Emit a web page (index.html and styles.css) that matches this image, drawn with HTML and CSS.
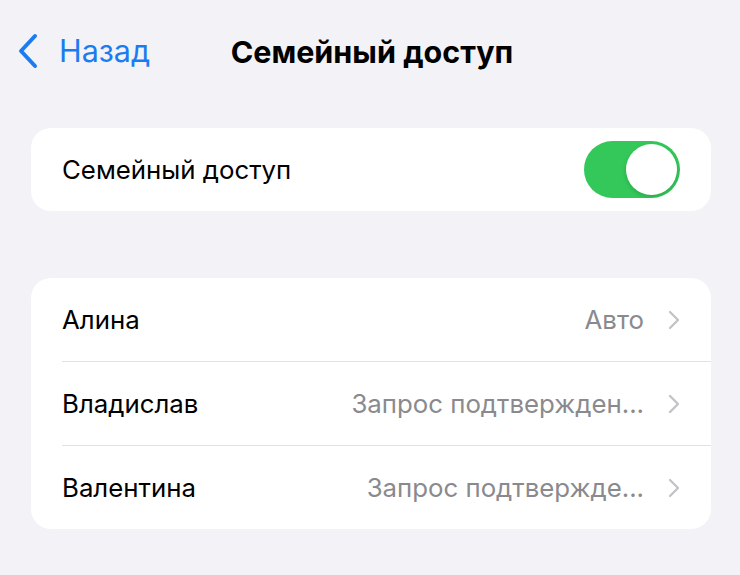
FILE: index.html
```html
<!DOCTYPE html>
<html>
<head>
  <meta charset="utf-8">
  <link rel="stylesheet" href="styles.css">
</head>
<body>
  <div class="screen">
    <header class="navbar">
      <a class="back">
        <svg class="back-icon" width="22" height="36" viewBox="0 0 22 36">
          <path d="M18 3 L4 18 L18 33" fill="none" stroke="#1a7cf0" stroke-width="4" stroke-linecap="round" stroke-linejoin="round"/>
        </svg>
        <span>Назад</span>
      </a>
      <h1 class="title">Семейный доступ</h1>
    </header>

    <section class="group">
      <div class="row">
        <span class="label">Семейный доступ</span>
        <div class="switch on"><div class="knob"></div></div>
      </div>
    </section>

    <section class="group list">
      <div class="row">
        <span class="label">Алина</span>
        <span class="value">Авто</span>
        <svg class="chevron" width="14" height="22" viewBox="0 0 14 22">
          <path d="M3 3 L11 11 L3 19" fill="none" stroke="#c3c3c8" stroke-width="2.4" stroke-linecap="round" stroke-linejoin="round"/>
        </svg>
      </div>
      <div class="row">
        <span class="label">Владислав</span>
        <span class="value">Запрос подтвержден...</span>
        <svg class="chevron" width="14" height="22" viewBox="0 0 14 22">
          <path d="M3 3 L11 11 L3 19" fill="none" stroke="#c3c3c8" stroke-width="2.4" stroke-linecap="round" stroke-linejoin="round"/>
        </svg>
      </div>
      <div class="row">
        <span class="label">Валентина</span>
        <span class="value">Запрос подтвержде...</span>
        <svg class="chevron" width="14" height="22" viewBox="0 0 14 22">
          <path d="M3 3 L11 11 L3 19" fill="none" stroke="#c3c3c8" stroke-width="2.4" stroke-linecap="round" stroke-linejoin="round"/>
        </svg>
      </div>
    </section>
  </div>
</body>
</html>
```

FILE: styles.css
```css
body {
  margin: 0;
  padding: 0;
  background-color: #f2f2f7;
  font-family: Inter, "Noto Sans", sans-serif;
  color: #000000;
}

.screen {
  width: 740px;
  height: 575px;
  padding: 0 29px 0 31px;
  box-sizing: border-box;
}

.navbar {
  position: relative;
  height: 105px;
  display: flex;
  align-items: center;
  justify-content: center;
}

.back {
  position: absolute;
  left: -14px;
  top: 33px;
  display: flex;
  align-items: center;
  gap: 20px;
  color: #1a7cf0;
  font-size: 30.5px;
}

.back span {
  margin-top: -2px;
}

.title {
  margin: -2px 0 0 2px;
  font-size: 30.5px;
  font-weight: 700;
  letter-spacing: 0;
}

.group {
  background-color: #ffffff;
  border-radius: 20px;
  margin-top: 23px;
}

.list {
  margin-top: 67px;
}

.row {
  height: 83px;
  display: flex;
  align-items: center;
  padding: 0 31px;
  font-size: 25.8px;
}

.list .row {
  padding-right: 30px;
}

.list .row + .row {
  border-top: 1.5px solid #e2e2e6;
  margin-left: 31px;
  padding-left: 0;
}

.label {
  flex: 1;
}

.value {
  color: #8a8a8e;
  margin-right: 23px;
}

.chevron {
  display: block;
}

.switch {
  width: 96px;
  height: 57px;
  border-radius: 29px;
  background-color: #34c759;
  position: relative;
}

.knob {
  position: absolute;
  top: 3px;
  right: 3px;
  width: 51px;
  height: 51px;
  border-radius: 50%;
  background-color: #ffffff;
  box-shadow: 0 2px 4px rgba(0, 0, 0, 0.15);
}
```
